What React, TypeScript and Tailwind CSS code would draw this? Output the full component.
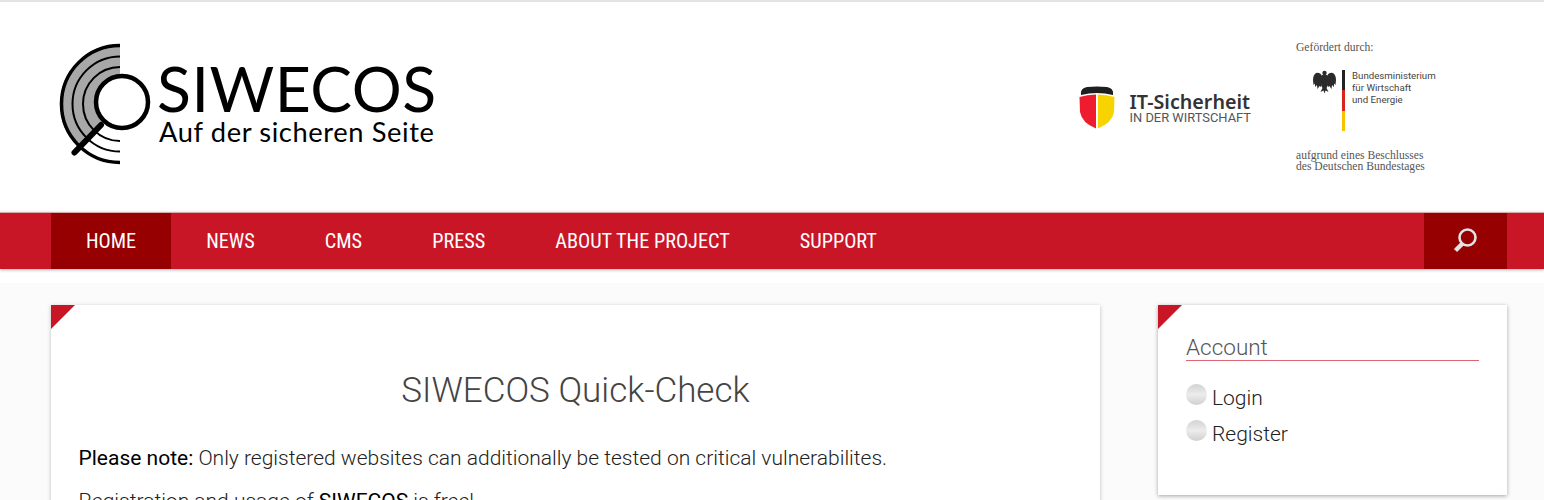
const navItems = ["HOME", "NEWS", "CMS", "PRESS", "ABOUT THE PROJECT", "SUPPORT"];

const SiwecosMark = () => (
  <svg width="110" height="130" viewBox="55 38 110 130" className="shrink-0">
    <defs>
      <clipPath id="leftHalf">
        <rect x="55" y="38" width="65" height="130" />
      </clipPath>
    </defs>
    <g clipPath="url(#leftHalf)">
      <path d="M120 44 A60 60 0 0 0 78 147 L102 124 L120 104 Z" fill="#a8a8a8" />
      <g fill="none" stroke="#000">
        <circle cx="120" cy="104" r="58.500" strokeWidth="3.500" />
        <circle cx="120" cy="104" r="47.500" strokeWidth="2" />
        <circle cx="120" cy="104" r="37" strokeWidth="2" />
      </g>
    </g>
    <circle cx="122" cy="102" r="26" fill="#fff" stroke="#000" strokeWidth="4.500" />
    <path d="M101 125 L74.500 152.500" stroke="#000" strokeWidth="6" strokeLinecap="round" />
  </svg>
);

const ItShield = () => (
  <svg width="36" height="44" viewBox="0 0 36 44">
    <path d="M2 9 Q1 2 8 1 Q18 0 28 1 Q35 2 34 9 Q18 5 2 9 Z" fill="#1f1f1f" />
    <path d="M0.500 11 Q8 8.500 17 8.500 V42.500 Q3 37 1 26 Z" fill="#ee1c2e" />
    <path d="M18.800 8.500 Q28 8.500 35.500 11 L35 26 Q33 37 18.800 42.500 Z" fill="#f7d400" />
  </svg>
);

const Eagle = () => (
  <svg width="23" height="24" viewBox="0 0 23 24" fill="#2b2b2b">
    <circle cx="11.500" cy="3" r="2.200" />
    <path d="M9 5 H14 L15 15 L13.500 18 L15.500 22 L12.500 20.500 L11.500 23.500 L10.500 20.500 L7.500 22 L9.500 18 L8 15 Z" />
    <path d="M9 6 Q7 2 3 3 Q0 5 0 10 L0.500 15 L2 13.500 L2 17 L4 15 L4.500 19 L6.500 16 L8 17 L9 12 Z" />
    <path d="M14 6 Q16 2 20 3 Q23 5 23 10 L22.500 15 L21 13.500 L21 17 L19 15 L18.500 19 L16.500 16 L15 17 L14 12 Z" />
  </svg>
);

const SearchGlass = () => (
  <svg width="26" height="26" viewBox="0 0 26 26" fill="none">
    <circle cx="14.500" cy="9.500" r="8" stroke="#e3e3e3" strokeWidth="2.600" />
    <path d="M9.500 15.500 L2.500 22.500" stroke="#e3e3e3" strokeWidth="4.500" />
  </svg>
);

const Corner = () => (
  <div className="absolute top-0 left-0 h-0 w-0 border-t-[24px] border-r-[24px] border-t-[#c91627] border-r-transparent" />
);

const RadioDot = () => (
  <span className="h-[21px] w-[21px] shrink-0 -translate-y-[4px] rounded-full bg-gradient-to-b from-[#d2d2d2] via-[#ececec] to-[#d0d0d0]" />
);

export default function App() {
  return (
    <div className="h-[500px] overflow-hidden bg-white font-['Roboto',sans-serif]">
      <div className="h-[2px] bg-[#e4e4e4]" />

      <header className="flex h-[210px] items-start justify-between pr-[108px] pl-[55px]">
        <div className="flex pt-[36px]">
          <SiwecosMark />
          <div className="-ml-[6px] pt-[19px] font-['Lato',sans-serif] text-black">
            <div className="-ml-[2px] text-[62.500px] leading-[62px] tracking-[0.5px]">SIWECOS</div>
            <div className="text-[27.300px] leading-[26px] tracking-[0.6px]">Auf der sicheren Seite</div>
          </div>
        </div>

        <div className="flex items-start">
          <div className="mt-[84px] flex items-center gap-[14px]">
            <ItShield />
            <div className="text-[#333]">
              <div className="font-['Noto_Sans',sans-serif] text-[19.700px] leading-[20px] font-semibold">IT-Sicherheit</div>
              <div className="text-[12.900px] leading-[12px] text-[#555]">IN DER WIRTSCHAFT</div>
            </div>
          </div>

          <div className="mt-[40px] ml-[45px] w-[140px] font-['Liberation_Serif',serif] text-[11.600px] leading-[11px] text-[#555]">
            <div>Gefördert durch:</div>
            <div className="mt-[17px] ml-[17px] flex h-[61px]">
              <Eagle />
              <div className="ml-[6px] flex h-[61px] w-[3px] shrink-0 flex-col">
                <div className="flex-1 bg-[#222]" />
                <div className="flex-1 bg-[#d8231f]" />
                <div className="flex-1 bg-[#f2c500]" />
              </div>
              <div className="ml-[7px] font-['Roboto',sans-serif] text-[9.700px] leading-[12px] text-[#444]">
                Bundesministerium
                <br />
                für Wirtschaft
                <br />
                und Energie
              </div>
            </div>
            <div className="mt-[19px]">
              aufgrund eines Beschlusses
              <br />
              des Deutschen Bundestages
            </div>
          </div>
        </div>
      </header>

      <nav className="flex h-[57px] justify-between border-t border-[#d9aeb0] bg-[#c91627] px-[37px] shadow-[0_1px_3px_rgba(0,0,0,0.3)]">
        <ul className="ml-[14px] flex">
          {navItems.map((item, i) => (
            <li
              key={item}
              className={
                i === 0
                  ? "flex items-center bg-[#960000] px-[35px] text-[20.300px] text-white [font-stretch:87%]"
                  : "flex items-center px-[35px] text-[20.300px] text-white [font-stretch:87%]"
              }
            >
              {item}
            </li>
          ))}
        </ul>
        <div className="flex w-[83px] items-center justify-center bg-[#960000]">
          <SearchGlass />
        </div>
      </nav>

      <div className="mt-[14px] flex h-[300px] items-start gap-[58px] bg-[#fbfbfb] pt-[22px] pl-[51px]">
        <main className="relative h-[300px] w-[1049px] bg-white px-[27.500px] pt-[66px] shadow-[0_1px_4px_rgba(0,0,0,0.25)]">
          <Corner />
          <h1 className="text-center text-[35px] leading-[40px] font-light text-[#444]">SIWECOS Quick-Check</h1>
          <p className="mt-[33px] text-[21px] leading-[28px] font-light text-[#222]">
            <span className="font-normal text-black">Please note:</span> Only registered websites can additionally be tested on critical vulnerabilites.
          </p>
          <p className="mt-[15px] text-[21px] leading-[28px] font-light text-[#222]">
            Registration and usage of <span className="font-normal text-black">SIWECOS</span> is free!
          </p>
        </main>

        <aside className="relative h-[190px] w-[349px] bg-white px-[28px] pt-[30px] shadow-[0_1px_4px_rgba(0,0,0,0.35)]">
          <Corner />
          <h2 className="h-[26px] border-b border-[#dc6675] text-[22.500px] leading-[25px] font-light text-[#555]">Account</h2>
          <ul className="mt-[23px] flex flex-col gap-[8px] text-[21px] leading-[28px] font-light text-[#222]">
            <li className="flex items-center gap-[5px]">
              <RadioDot />
              Login
            </li>
            <li className="flex items-center gap-[5px]">
              <RadioDot />
              Register
            </li>
          </ul>
        </aside>
      </div>
    </div>
  );
}
